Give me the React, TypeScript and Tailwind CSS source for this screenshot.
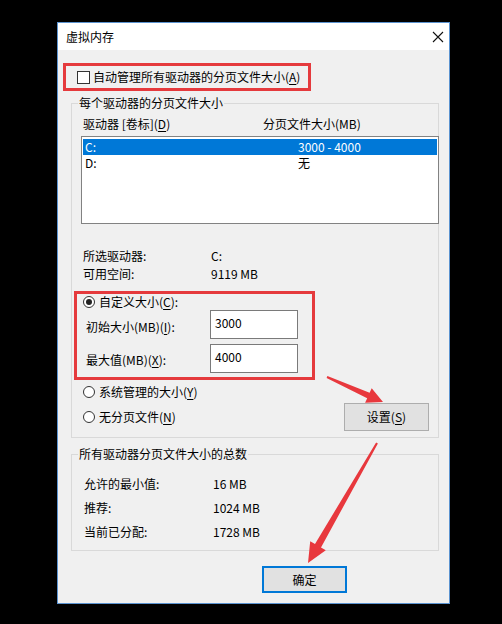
import React from "react";

const FONT = { fontFamily: '"Noto Sans CJK SC", "Microsoft YaHei", "Noto Sans", sans-serif' };

function Radio({ checked = false }: { checked?: boolean }) {
  return (
    <span className="flex h-[12px] w-[12px] shrink-0 items-center justify-center rounded-full border border-[#333] bg-white">
      {checked ? <span className="h-[6px] w-[6px] rounded-full bg-[#222]" /> : null}
    </span>
  );
}

function Key({ k }: { k: string }) {
  return <span className="underline underline-offset-2">{k}</span>;
}

function Row({ label, value, h = "h-[18px]", pl = "pl-[11px]", col = "w-[128px]" }: { label: string; value: string; h?: string; pl?: string; col?: string }) {
  return (
    <div className={`flex items-center ${h} ${pl}`}>
      <span className={`shrink-0 ${col}`}>{label}</span>
      <span>{value}</span>
    </div>
  );
}

export default function App() {
  return (
    <div className="relative h-[624px] w-[502px] overflow-hidden bg-black pl-[57px] pt-[22px] text-[12px] leading-[16px] text-black" style={FONT}>
      <div className="flex h-[582px] w-[393px] flex-col border border-[#5b93d0] bg-[#f0f0f0]">
        {/* title bar */}
        <div className="flex h-[27px] items-center justify-between bg-white pl-[8px] pr-[5px]">
          <span className="text-[12px]">虚拟内存</span>
          <svg width="12" height="12" viewBox="0 0 12 12">
            <path d="M1 1 L11 11 M11 1 L1 11" stroke="#111" strokeWidth="1.1" fill="none" />
          </svg>
        </div>

        {/* auto manage */}
        <div className="ml-[5px] mt-[13px] flex h-[28px] w-[248px] items-center border-[3px] border-[#e53a3d] pl-[11px]">
          <span className="h-[13px] w-[13px] shrink-0 border border-[#333] bg-white" />
          <span className="ml-[3px]">
            自动管理所有驱动器的分页文件大小(<Key k="A" />)
          </span>
        </div>

        {/* per drive */}
        <fieldset className="ml-[13px] mt-[4px] w-[368px] border border-[#d9d9d9] pb-[6px]">
          <legend className="ml-[6px] px-[1px] leading-[16px]">每个驱动器的分页文件大小</legend>

          <div className="mt-[5px] flex h-[16px] items-center pl-[11px]">
            <span className="w-[180px] shrink-0">
              驱动器 [卷标](<Key k="D" />)
            </span>
            <span>分页文件大小(MB)</span>
          </div>

          <div className="-mr-[1px] ml-[9px] mt-[4px] h-[88px] border border-[#828282] bg-white p-[1px] pt-[2px] leading-[16px]">
            <div className="flex h-[16px] items-center bg-[#0078d7] pl-[2px] text-white">
              <span className="w-[213px] shrink-0">C:</span>
              <span>3000 - 4000</span>
            </div>
            <div className="flex h-[16px] items-center pl-[2px]">
              <span className="w-[213px] shrink-0">D:</span>
              <span>无</span>
            </div>
          </div>

          <div className="mt-[23px]">
            <Row label="所选驱动器:" value="C:" />
            <Row label="可用空间:" value="9119 MB" />
          </div>

          {/* custom size */}
          <div className="ml-[2px] mt-[8px] h-[89px] w-[241px] border-[3px] border-[#e53a3d]">
            <div className="flex h-[16px] items-center gap-[4px] pl-[6px]">
              <Radio checked />
              <span>
                自定义大小(<Key k="C" />):
              </span>
            </div>
            <div className="flex items-start pl-[9px]">
              <span className="w-[124px] shrink-0 pt-[9px]">
                初始大小(MB)(<Key k="I" />):
              </span>
              <div className="h-[29px] w-[88px] border border-[#7a7a7a] bg-white pl-[4px] pt-[4px]">3000</div>
            </div>
            <div className="mt-[5px] flex items-start pl-[9px]">
              <span className="w-[124px] shrink-0 pt-[8px]">
                最大值(MB)(<Key k="X" />):
              </span>
              <div className="h-[29px] w-[88px] border border-[#7a7a7a] bg-white pl-[4px] pt-[4px]">4000</div>
            </div>
          </div>

          <div className="mt-[4px] flex h-[16px] items-center gap-[4px] pl-[11px]">
            <Radio />
            <span>
              系统管理的大小(<Key k="Y" />)
            </span>
          </div>

          <div className="mt-[3px] flex h-[28px] items-center justify-between pl-[11px] pr-[9px]">
            <div className="flex items-center gap-[4px]">
              <Radio />
              <span>
                无分页文件(<Key k="N" />)
              </span>
            </div>
            <button type="button" className="flex h-[28px] w-[85px] items-center justify-center border border-[#adadad] bg-[#e1e1e1]">
              <span>
                设置(<Key k="S" />)
              </span>
            </button>
          </div>
        </fieldset>

        {/* totals */}
        <fieldset className="ml-[13px] mt-[8px] w-[368px] border border-[#d9d9d9] pb-[6px]">
          <legend className="ml-[6px] px-[1px] leading-[16px]">所有驱动器分页文件大小的总数</legend>
          <div className="mt-[10px]">
            <Row label="允许的最小值:" value="16 MB" h="h-[24px]" pl="pl-[12px]" col="w-[129px]" />
            <Row label="推荐:" value="1024 MB" h="h-[24px]" pl="pl-[12px]" col="w-[129px]" />
            <Row label="当前已分配:" value="1728 MB" h="h-[24px]" pl="pl-[12px]" col="w-[129px]" />
          </div>
        </fieldset>

        <button type="button" className="ml-[204px] mt-[15px] flex h-[27px] w-[85px] items-center justify-center border-2 border-[#0078d7] bg-[#e1e1e1]">
          确定
        </button>
      </div>

      {/* annotation arrows */}
      <svg className="pointer-events-none absolute left-0 top-0" width="502" height="624" viewBox="0 0 502 624">
        <polygon
          fill="#e8383d"
          points="326.6,377.9 367.2,398.2 365.1,402.8 383,402 371.7,388.2 369.6,392.8 327.4,376.1"
        />
        <polygon
          fill="#e8383d"
          points="377.9,443.5 321.0,547.4 325.8,550.2 308,563 310.2,541.2 315.0,544.0 376.1,442.5"
        />
      </svg>
    </div>
  );
}
